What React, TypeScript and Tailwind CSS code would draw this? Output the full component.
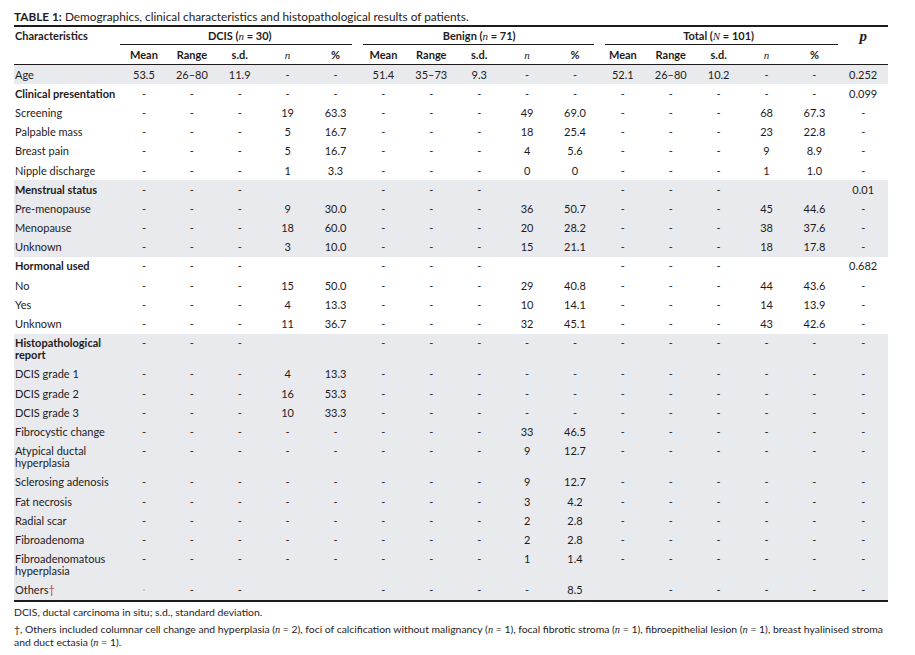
import React from 'react';

type Row = {
  label: React.ReactNode;
  vals: string[];
  p: string;
  bold?: boolean;
  gray?: boolean;
  tall?: boolean;
};

const g = (dn: string, dp: string, bn: string, bp: string, tn: string, tp: string) => [
  '-', '-', '-', dn, dp,
  '-', '-', '-', bn, bp,
  '-', '-', '-', tn, tp,
];

const benignOnly = (n: string, pc: string) => g('-', '-', n, pc, '-', '-');

const rows: Row[] = [
  { label: 'Age', vals: ['53.5', '26–80', '11.9', '-', '-', '51.4', '35–73', '9.3', '-', '-', '52.1', '26–80', '10.2', '-', '-'], p: '0.252', gray: true },
  { label: 'Clinical presentation', vals: g('-', '-', '-', '-', '-', '-'), p: '0.099', bold: true },
  { label: 'Screening', vals: g('19', '63.3', '49', '69.0', '68', '67.3'), p: '-' },
  { label: 'Palpable mass', vals: g('5', '16.7', '18', '25.4', '23', '22.8'), p: '-' },
  { label: 'Breast pain', vals: g('5', '16.7', '4', '5.6', '9', '8.9'), p: '-' },
  { label: 'Nipple discharge', vals: g('1', '3.3', '0', '0', '1', '1.0'), p: '-' },
  { label: 'Menstrual status', vals: g('', '', '', '', '', ''), p: '0.01', bold: true, gray: true },
  { label: 'Pre-menopause', vals: g('9', '30.0', '36', '50.7', '45', '44.6'), p: '-', gray: true },
  { label: 'Menopause', vals: g('18', '60.0', '20', '28.2', '38', '37.6'), p: '-', gray: true },
  { label: 'Unknown', vals: g('3', '10.0', '15', '21.1', '18', '17.8'), p: '-', gray: true },
  { label: 'Hormonal used', vals: g('', '', '', '', '', ''), p: '0.682', bold: true },
  { label: 'No', vals: g('15', '50.0', '29', '40.8', '44', '43.6'), p: '-' },
  { label: 'Yes', vals: g('4', '13.3', '10', '14.1', '14', '13.9'), p: '-' },
  { label: 'Unknown', vals: g('11', '36.7', '32', '45.1', '43', '42.6'), p: '-' },
  { label: <>Histopathological<br />report</>, vals: g('', '', '-', '-', '-', '-'), p: '-', bold: true, gray: true, tall: true },
  { label: 'DCIS grade 1', vals: g('4', '13.3', '-', '-', '-', '-'), p: '-', gray: true },
  { label: 'DCIS grade 2', vals: g('16', '53.3', '-', '-', '-', '-'), p: '-', gray: true },
  { label: 'DCIS grade 3', vals: g('10', '33.3', '-', '-', '-', '-'), p: '-', gray: true },
  { label: 'Fibrocystic change', vals: benignOnly('33', '46.5'), p: '-', gray: true },
  { label: <>Atypical ductal<br />hyperplasia</>, vals: benignOnly('9', '12.7'), p: '-', gray: true, tall: true },
  { label: 'Sclerosing adenosis', vals: benignOnly('9', '12.7'), p: '-', gray: true },
  { label: 'Fat necrosis', vals: benignOnly('3', '4.2'), p: '-', gray: true },
  { label: 'Radial scar', vals: benignOnly('2', '2.8'), p: '-', gray: true },
  { label: 'Fibroadenoma', vals: benignOnly('2', '2.8'), p: '-', gray: true },
  { label: <>Fibroadenomatous<br />hyperplasia</>, vals: benignOnly('1', '1.4'), p: '-', gray: true, tall: true },
  {
    label: <>Others<span className="text-[#c8412b]">†</span></>,
    vals: ['·', '-', '-', '', '', '-', '-', '-', '-', '8.5', '', '-', '-', '-', '-'],
    p: '-',
    gray: true,
  },
];

const N = () => <span className="font-['Liberation_Serif'] italic font-normal">n</span>;

const cols = 'grid grid-cols-[106px_repeat(15,47.9px)_1fr]';

export default function App() {
  return (
    <div className="min-h-[655px] bg-white font-['Lato',sans-serif] text-[#1f1b1c]">
      <div className="ml-[14px] w-[874px] pt-[10px]">
        <div className="whitespace-nowrap text-[11.8px] leading-[14px]">
          <span className="font-bold">TABLE 1:</span> Demographics, clinical characteristics and histopathological results of patients.
        </div>
        <div className="mt-[1px] h-[2px] bg-[#1f1b1c]" />

        {/* header */}
        <div className={`${cols} text-[11px] font-bold`}>
          <div className="row-span-2 pl-[1px] leading-[12px] pt-[3px]">Characteristics</div>
          <div className="col-span-5 flex flex-col">
            <div className="h-[17px] text-center leading-[17px]">DCIS (<N /> = 30)</div>
            <div className="mr-[7px] h-px bg-[#1f1b1c]" />
          </div>
          <div className="col-span-5 flex flex-col">
            <div className="h-[17px] text-center leading-[17px]">Benign (<N /> = 71)</div>
            <div className="ml-[4px] mr-[5px] h-px bg-[#1f1b1c]" />
          </div>
          <div className="col-span-5 flex flex-col">
            <div className="h-[17px] text-center leading-[17px]">Total (<span className="font-['Liberation_Serif'] italic font-normal">N</span> = 101)</div>
            <div className="ml-[6px] h-px bg-[#1f1b1c]" />
          </div>
          <div className="row-span-2 text-center font-['Liberation_Serif'] text-[15px] italic leading-[16px] pt-[1px]">p</div>
          {['DCIS', 'Benign', 'Total'].map((grp) =>
            ['Mean', 'Range', 's.d.', 'n', '%'].map((h) => (
              <div key={grp + h} className="h-[19px] text-center leading-[19px]">
                {h === 'n' ? <N /> : h}
              </div>
            ))
          )}
        </div>
        <div className="h-px bg-[#1f1b1c]" />

        {/* body */}
        <div className="text-[11px] leading-[12px]">
          {rows.map((r, i) => (
            <div
              key={i}
              className={`${cols} ${r.gray ? 'bg-[#e9eaee]' : ''} ${r.tall ? 'h-[31.2px]' : 'h-[19.2px]'} py-[3.6px]`}
            >
              <div className={`pl-[1px] whitespace-nowrap ${r.bold ? 'font-bold' : ''}`}>{r.label}</div>
              {r.vals.map((v, j) => (
                <div key={j} className={`text-center ${v === '·' ? 'text-[#b8b8b8]' : ''}`}>{v}</div>
              ))}
              <div className="text-center">{r.p}</div>
            </div>
          ))}
        </div>
        <div className="h-[2px] bg-[#1f1b1c]" />

        <div className="pt-[4px] text-[10.4px] leading-[12px] whitespace-nowrap">
          <div>DCIS, ductal carcinoma in situ; s.d., standard deviation.</div>
          <div className="mt-[5px]">
            †, Others included columnar cell change and hyperplasia (<N /> = 2), foci of calcification without malignancy (<N /> = 1), focal fibrotic stroma (<N /> = 1), fibroepithelial lesion (<N /> = 1), breast hyalinised stroma
            <br />
            and duct ectasia (<N /> = 1).
          </div>
        </div>
      </div>
    </div>
  );
}
